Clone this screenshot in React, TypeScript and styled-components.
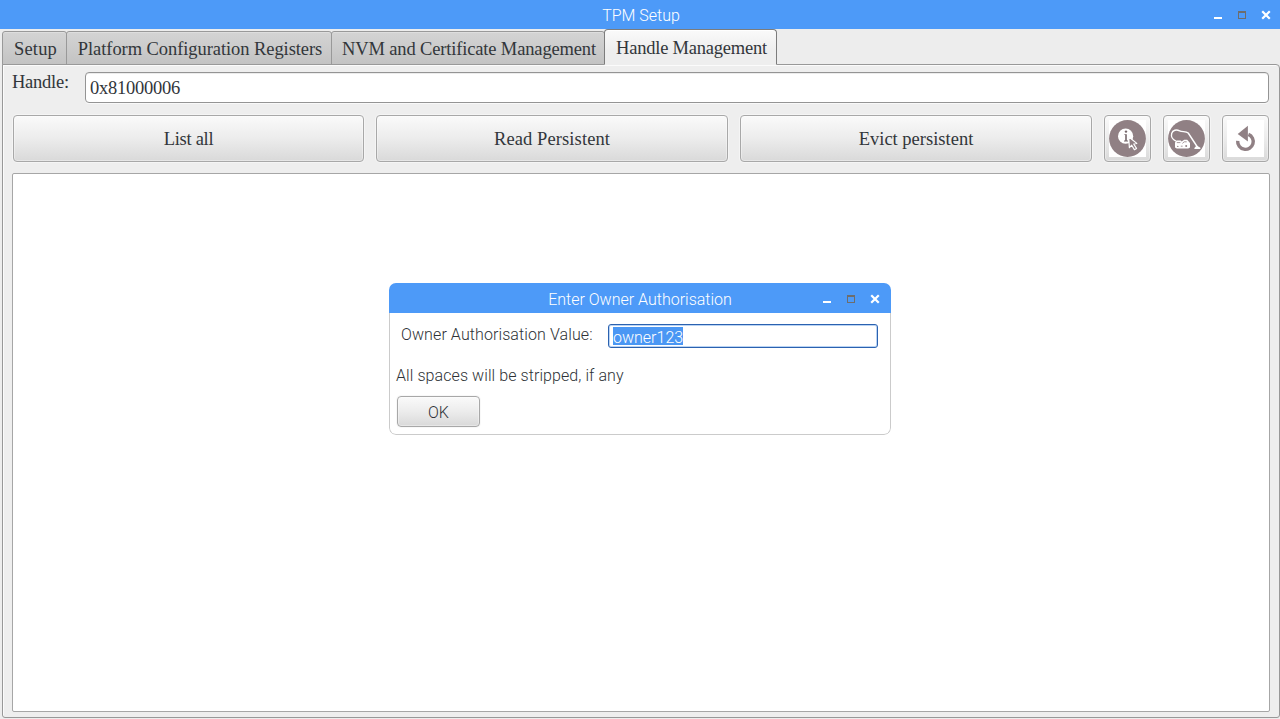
import React from "react";
import styled, { createGlobalStyle, css } from "styled-components";

const GlobalStyle = createGlobalStyle`
  * { box-sizing: border-box; }
  html, body { margin: 0; padding: 0; }
  body { width: 1280px; height: 719px; overflow: hidden; background: #ededed; }
`;

const serif = css`
  font-family: "Liberation Serif", "Times New Roman", serif;
  font-size: 18.5px;
  line-height: 22px;
  color: #32363a;
`;

const sans = css`
  font-family: Roboto, sans-serif;
  font-weight: 300;
  font-size: 16px;
  line-height: 20px;
  color: #2e3236;
`;

const Desktop = styled.main`
  position: relative;
  width: 1280px;
  height: 719px;
  display: flex;
  flex-direction: column;
  background: #ededed;
`;

const TitleBar = styled.header<{ $height: number; $inset: number }>`
  ${sans}
  flex: none;
  height: ${(p) => p.$height}px;
  display: grid;
  grid-template-columns: 1fr auto 1fr;
  align-items: center;
  padding: ${(p) => p.$height - 28}px ${(p) => p.$inset}px 0;
  background: #4d9af8;
  color: #fff;
`;

const TitleText = styled.h1<{ $shift?: number }>`
  grid-column: 2;
  margin: 0 0 0 ${(p) => p.$shift ?? 0}px;
  padding-top: 1px;
  font: inherit;
  white-space: nowrap;
`;

const Controls = styled.div`
  display: flex;
  justify-content: flex-end;
  height: 10px;
  svg { display: block; }
`;

const Notebook = styled.section`
  flex: 1;
  display: flex;
  flex-direction: column;
  padding: 0 0 1px 2px;
`;

const TabStrip = styled.nav`
  display: flex;
  align-items: flex-end;
  height: 36px;
  margin-bottom: -1px;
`;

const Tab = styled.button<{ $width: number; $active?: boolean; $spacing?: number }>`
  ${serif}
  flex: none;
  width: ${(p) => p.$width}px;
  height: ${(p) => (p.$active ? 36 : 34)}px;
  margin: 0 -1px 0 0;
  padding: ${(p) => (p.$active ? 1 : 2)}px 0 0 2px;
  border: 1px solid ${(p) => (p.$active ? "#7c7c7c" : "#999")};
  border-bottom-color: ${(p) => (p.$active ? "#eee" : "#999")};
  border-radius: ${(p) => (p.$active ? "4px 4px 0 0" : "3px 3px 0 0")};
  background: ${(p) =>
    p.$active ? "linear-gradient(#fafafa, #eee 60%)" : "linear-gradient(#d4d4d4, #c3c3c3)"};
  box-shadow: inset 0 1px ${(p) => (p.$active ? "#fff" : "#dedede")};
  position: relative;
  z-index: ${(p) => (p.$active ? 1 : 0)};
  white-space: nowrap;
  letter-spacing: ${(p) => p.$spacing ?? 0}px;
`;

const Page = styled.div`
  flex: 1;
  display: flex;
  flex-direction: column;
  padding: 6px 9px 5px;
  border: 1px solid #989898;
  border-radius: 0 4px 3px 3px;
  box-shadow: inset 1px 1px #fbfbfb;
  background: #eee;
`;

const FieldRow = styled.div`
  display: flex;
  align-items: flex-start;
  height: 32px;
`;

const HandleLabel = styled.label`
  ${serif}
  width: 73px;
  letter-spacing: -0.25px;
`;

const HandleInput = styled.input`
  ${serif}
  flex: 1;
  height: 31px;
  margin: 1px 1px 0 0;
  padding: 1px 4px 0;
  border: 1px solid #949494;
  border-radius: 4px;
  outline: none;
  background: #fff;
  box-shadow: 0 1px #f9f9f9, inset 0 1px #ececec;
  letter-spacing: -0.25px;
`;

const ActionRow = styled.div`
  display: grid;
  grid-template-columns: 351px 352px 352px 47px 47px 47px;
  column-gap: 12px;
  margin: 12px 0 0 1px;
`;

const button = css`
  display: flex;
  align-items: center;
  justify-content: center;
  padding: 0;
  border: 1px solid #a8a8a8;
  border-radius: 4px;
  background: linear-gradient(#fafafa, #ececec 50%, #d9d9d9);
  box-shadow: inset 0 0 0 1px rgba(255, 255, 255, 0.35), 0 0 0 1px rgba(246, 246, 246, 0.8);
`;

const ActionButton = styled.button<{ $spacing?: number }>`
  ${button}
  ${serif}
  height: 47px;
  padding-top: 1px;
  letter-spacing: ${(p) => p.$spacing ?? 0}px;
`;

const IconButton = styled(ActionButton)`
  padding: 0;
  svg { display: block; background: #fff; }
`;

const Output = styled.div`
  height: 539px;
  margin-top: 11px;
  border: 1px solid #a6a6a6;
  border-radius: 2px;
  background: #fff;
`;

const Dialog = styled.section`
  position: absolute;
  left: 389px;
  top: 283px;
  width: 502px;
  height: 152px;
  display: flex;
  flex-direction: column;
  border-radius: 7px;
  overflow: hidden;
  background: #fff;
`;

const DialogBody = styled.div`
  flex: 1;
  display: flex;
  flex-direction: column;
  align-items: flex-start;
  padding: 11px 12px 0 6px;
  border: 1px solid #cbcbcb;
  border-top: 0;
  border-radius: 0 0 7px 7px;
`;

const AuthRow = styled.div`
  display: flex;
  align-self: stretch;
  height: 25px;
`;

const AuthLabel = styled.label`
  ${sans}
  width: 212px;
  padding: 1px 0 0 5px;
  letter-spacing: 0.1px;
`;

const AuthField = styled.div`
  ${sans}
  flex: 1;
  display: flex;
  align-items: flex-start;
  height: 24px;
  padding: 2px 0 0 4px;
  border: 1px solid #2b62b0;
  border-radius: 3px;
  box-shadow: inset 0 0 0 1px #b9d3f3;
`;

const Selection = styled.span`
  height: 18px;
  line-height: 21px;
  background: #4a97f4;
  color: #fff;
`;

const Note = styled.p`
  ${sans}
  margin: 17px 0 10px;
  letter-spacing: 0.08px;
`;

const OkButton = styled.button`
  ${button}
  ${sans}
  width: 83px;
  height: 31px;
  margin-left: 1px;
  padding-top: 2px;
`;

const WindowControls = () => (
  <Controls>
    <svg width="58" height="10" viewBox="0 0 58 10" shapeRendering="crispEdges">
      <path d="M1 7h8v2h-8z" fill="#fff" />
      <path d="M25 1h8v8h-8zM26 3v5h6v-5z" fill="#6d6d6d" fillRule="evenodd" />
      <path d="M50 2L56 8M56 2L50 8" stroke="#fff" strokeWidth="2.2" strokeLinecap="square" shapeRendering="auto" />
    </svg>
  </Controls>
);

const PLUM = "#908084";

const InfoIcon = () => (
  <svg width="37" height="37" viewBox="0 0 37 37">
    <circle cx="18.5" cy="18.5" r="18.4" fill={PLUM} />
    <circle cx="16.6" cy="16.2" r="7.6" fill="#fff" />
    <circle cx="17" cy="11.6" r="1.2" fill="#74666a" />
    <path d="M15.4 14.2h2.4v6.4h1.2v.9h-4v-.9h1.2v-5.5h-.8z" fill="#74666a" />
    <path d="M19.6 16.8l8.2 6.6-3.1.6 2.8 4.4-2.1 1.3-2.7-4.5-2.3 2.5z" fill={PLUM} stroke="#fff" strokeWidth="1.2" strokeLinejoin="round" />
  </svg>
);

const VacuumIcon = () => (
  <svg width="37" height="37" viewBox="0 0 37 37">
    <circle cx="18.5" cy="18.5" r="18.4" fill={PLUM} />
    <path d="M7.6 20.8C4.4 19.6 2.9 16.4 3.7 13.4C4.7 9.9 8.4 9.3 11.6 10.8C14.4 12.2 17.8 10.9 20.2 13L29.4 27" fill="none" stroke="#fff" strokeWidth="1.4" strokeLinecap="round" strokeLinejoin="round" />
    <path d="M28.6 25.4l3.8 2.4v1.2h-6v-1z" fill="#fff" />
    <path d="M7 27.6v-5l1.6-2.2h4.2l.8 1 2.6-1.6h3l2.8 3.2v4.6l-1.8 1h-11.4z" fill="#fff" />
    <path d="M8.8 22.6h3.6M14.4 23.4l1.8-1.6h2.5M12.8 26.2h1.8" fill="none" stroke={PLUM} strokeWidth=".8" />
    <circle cx="18.2" cy="26" r="1" fill={PLUM} />
    <circle cx="9.8" cy="26.4" r=".7" fill={PLUM} />
  </svg>
);

const UndoIcon = () => (
  <svg width="37" height="37" viewBox="0 0 37 37">
    <path d="M10.7 14L20.9 5.8V21.4z" fill={PLUM} />
    <path d="M10.7 20.8A7.8 7.8 0 1 0 21.4 14.3" fill="none" stroke={PLUM} strokeWidth="3.4" />
  </svg>
);

export default function App() {
  return (
    <>
      <GlobalStyle />
      <Desktop>
        <TitleBar $height={29} $inset={9}>
          <TitleText $shift={2}>TPM Setup</TitleText>
          <WindowControls />
        </TitleBar>
        <Notebook>
          <TabStrip>
            <Tab $width={65} $spacing={0.2}>Setup</Tab>
            <Tab $width={266} $spacing={-0.07}>Platform Configuration Registers</Tab>
            <Tab $width={274} $spacing={-0.15}>NVM and Certificate Management</Tab>
            <Tab $width={173} $spacing={-0.22} $active>Handle Management</Tab>
          </TabStrip>
          <Page>
            <FieldRow>
              <HandleLabel htmlFor="handle">Handle:</HandleLabel>
              <HandleInput id="handle" defaultValue="0x81000006" />
            </FieldRow>
            <ActionRow>
              <ActionButton $spacing={-0.3}>List all</ActionButton>
              <ActionButton $spacing={0.1}>Read Persistent</ActionButton>
              <ActionButton>Evict persistent</ActionButton>
              <IconButton aria-label="Info"><InfoIcon /></IconButton>
              <IconButton aria-label="Clear"><VacuumIcon /></IconButton>
              <IconButton aria-label="Back"><UndoIcon /></IconButton>
            </ActionRow>
            <Output />
          </Page>
        </Notebook>
        <Dialog role="dialog">
          <TitleBar $height={30} $inset={11}>
            <TitleText>Enter Owner Authorisation</TitleText>
            <WindowControls />
          </TitleBar>
          <DialogBody>
            <AuthRow>
              <AuthLabel>Owner Authorisation Value:</AuthLabel>
              <AuthField><Selection>owner123</Selection></AuthField>
            </AuthRow>
            <Note>All spaces will be stripped, if any</Note>
            <OkButton>OK</OkButton>
          </DialogBody>
        </Dialog>
      </Desktop>
    </>
  );
}
